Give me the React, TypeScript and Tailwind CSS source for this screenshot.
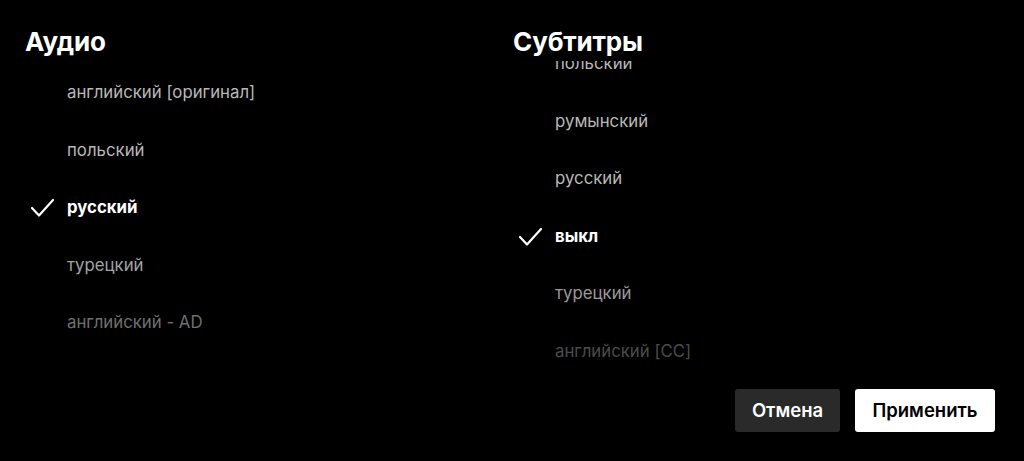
const audio = [
  { label: "английский [оригинал]", tone: "text-[#b8b8b8]" },
  { label: "польский", tone: "text-[#b8b8b8]" },
  { label: "русский", tone: "text-white", selected: true },
  { label: "турецкий", tone: "text-[#a3a3a3]" },
  { label: "английский - AD", tone: "text-[#6f6f6f]" },
];

const subtitles = [
  { label: "польский", tone: "text-[#b8b8b8]" },
  { label: "румынский", tone: "text-[#b8b8b8]" },
  { label: "русский", tone: "text-[#b8b8b8]" },
  { label: "выкл", tone: "text-white", selected: true },
  { label: "турецкий", tone: "text-[#9a9a9a]" },
  { label: "английский [CC]", tone: "text-[#4c4c4c]" },
];

type Item = { label: string; tone: string; selected?: boolean };

function Check() {
  return (
    <svg width="23" height="19" viewBox="0 0 23 19" fill="none">
      <polyline
        points="1,10 8,17.5 22,2"
        stroke="white"
        strokeWidth="2.2"
        strokeLinecap="round"
        strokeLinejoin="round"
      />
    </svg>
  );
}

function Option({ item }: { item: Item }) {
  return (
    <li className="flex h-[57.5px] items-center">
      <span className="flex w-[42px] shrink-0 items-center pl-[6px]">
        {item.selected && <Check />}
      </span>
      <span
        className={`text-[16.8px] ${item.tone} ${item.selected ? "font-bold" : "font-normal"}`}
      >
        {item.label}
      </span>
    </li>
  );
}

export default function App() {
  return (
    <div
      className="flex h-[461px] w-[1024px] flex-col overflow-hidden bg-black text-white"
      style={{ fontFamily: "Inter, 'Noto Sans', sans-serif" }}
    >
      <div className="flex h-[389px] px-[25px]">
        {/* Audio */}
        <section className="flex w-[488px] flex-col">
          <h2 className="h-[57px] pt-[29px] text-[26px] font-bold leading-[26px] tracking-[-0.2px]">
            Аудио
          </h2>
          <ul className="mt-[7px]">
            {audio.map((a) => (
              <Option key={a.label} item={a} />
            ))}
          </ul>
        </section>

        {/* Subtitles */}
        <section className="flex flex-1 flex-col">
          <h2 className="h-[57px] pt-[29px] text-[26px] font-bold leading-[26px] tracking-[-0.2px]">
            Субтитры
          </h2>
          <div className="mt-[4px] min-h-0 flex-1 overflow-hidden">
            <ul className="-mt-[26px]">
              {subtitles.map((s) => (
                <Option key={s.label} item={s} />
              ))}
            </ul>
          </div>
        </section>
      </div>

      <div className="flex justify-end gap-[15px] pr-[29px]">
        <button className="h-[43px] w-[105px] rounded-[3px] bg-[#2a2a2a] text-[18.5px] font-semibold text-white">
          Отмена
        </button>
        <button className="h-[43px] w-[140px] rounded-[3px] bg-white text-[18.5px] font-semibold text-black">
          Применить
        </button>
      </div>
    </div>
  );
}
